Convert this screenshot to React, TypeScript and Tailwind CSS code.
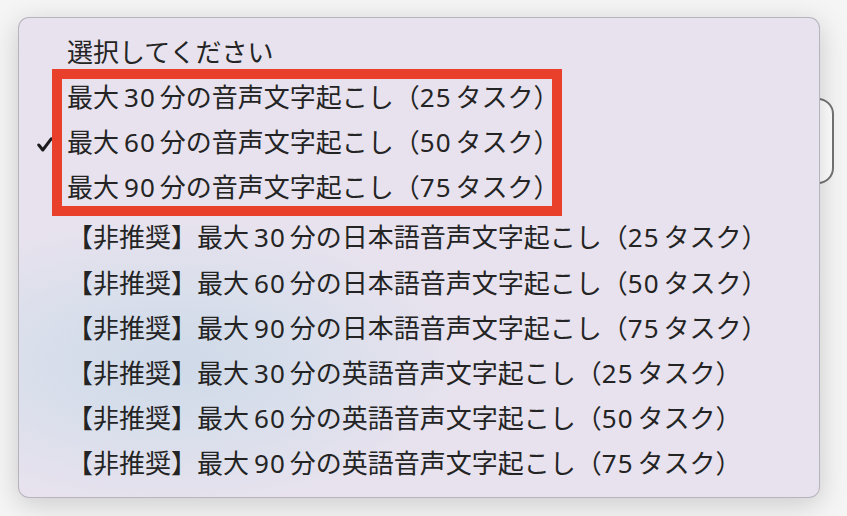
import React from 'react';

/** Options of the opened select menu, in order */
const OPTIONS = [
  '選択してください',
  '最大30分の音声文字起こし（25タスク）',
  '最大60分の音声文字起こし（50タスク）',
  '最大90分の音声文字起こし（75タスク）',
  '【非推奨】最大30分の日本語音声文字起こし（25タスク）',
  '【非推奨】最大60分の日本語音声文字起こし（50タスク）',
  '【非推奨】最大90分の日本語音声文字起こし（75タスク）',
  '【非推奨】最大30分の英語音声文字起こし（25タスク）',
  '【非推奨】最大60分の英語音声文字起こし（50タスク）',
  '【非推奨】最大90分の英語音声文字起こし（75タスク）',
];

const SELECTED = 2;

/** Splits digits out so they get the small CJK/Latin gap macOS adds */
function Label({ text }: { text: string }) {
  const parts = text.split(/(\d+)/);
  return (
    <>
      {parts.map((p, i) => {
        if (!/^\d+$/.test(p)) return <span key={i}>{p}</span>;
        const afterParen = parts[i - 1]?.endsWith('（');
        return (
          <span key={i} className={`${afterParen ? 'ml-0' : 'ml-[5px]'} mr-[4px] tracking-[1px]`}>
            {p}
          </span>
        );
      })}
    </>
  );
}

function Check() {
  return (
    <svg viewBox="0 0 16 15" className="w-[16px] h-[15px] mt-[5px]" fill="none">
      <path d="M1.8 8 L5.8 13 L14.2 1.8" stroke="#1c1c1c" strokeWidth="3" strokeLinecap="round" strokeLinejoin="round" />
    </svg>
  );
}

export default function App() {
  return (
    <div
      className="relative w-full h-[516px] overflow-hidden bg-[#f5f5f5]"
      style={{ fontFamily: '"Noto Sans", "Noto Sans CJK JP", sans-serif' }}
    >
      {/* select control behind the open menu */}
      <div className="pt-[98px] pl-[434px]">
        <div className="w-[400px] h-[86px] rounded-[16px] border-2 border-[#737373] bg-white" />
      </div>

      {/* open menu */}
      <div className="absolute left-[18px] top-[17px] w-[802px] h-[481px] rounded-[11px] border border-black/20 bg-[radial-gradient(ellipse_36%_30%_at_19%_72%,#cfd9e8_0%,#d9dfeb_50%,#e7e2ee_100%)] shadow-[0_6px_28px_rgba(0,0,0,0.18)] pt-[11px] flex flex-col text-[26px] text-[#242424] leading-none">
        {OPTIONS.map((opt, i) => (
          <div key={i} className={`flex items-center h-[45.2px] shrink-0 ${i === 3 ? 'mb-[5px]' : ''}`}>
            <div className="w-[48px] pl-[18px] flex items-center">
              {i === SELECTED && <Check />}
            </div>
            <span className="whitespace-nowrap">
              <Label text={opt} />
            </span>
          </div>
        ))}

        {/* highlight annotation around the recommended options */}
        <div className="absolute left-[33px] top-[51px] w-[510px] h-[147px] border-[10px] border-[#e8402a]" />
      </div>
    </div>
  );
}
